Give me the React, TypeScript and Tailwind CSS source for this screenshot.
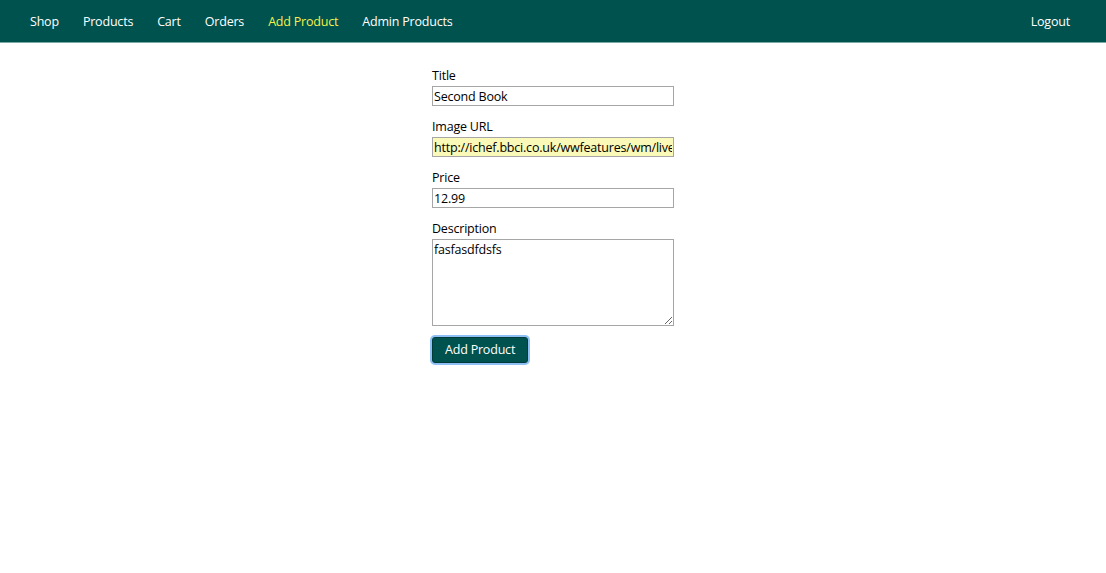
import React, { useState } from 'react';

const navItems = ['Shop', 'Products', 'Cart', 'Orders', 'Add Product', 'Admin Products'];

const Header: React.FC = () => (
    <header className="h-[43px] bg-[#00524f] border-b border-[#7fa9a7] flex items-center justify-between pl-[30px] pr-[36px] pt-[2px]">
        <nav className="flex items-center gap-[24px]">
            {navItems.map(item => (
                <a key={item} href="#" className={item === 'Add Product' ? 'text-[#f5f04a]' : 'text-white'}>
                    {item}
                </a>
            ))}
        </nav>
        <a href="#" className="text-white">Logout</a>
    </header>
);

const Field: React.FC<{ label: string; children: React.ReactNode }> = ({ label, children }) => (
    <div className="mb-[11px]">
        <label className="block pt-[1px] leading-[18px] text-black">{label}</label>
        <div className="mt-[1px]">{children}</div>
    </div>
);

const inputClass = 'block w-full h-[20px] px-[1px] border border-[#a6a6a6] text-[12.5px] tracking-[-0.2px] text-black outline-none';

const App: React.FC = () => {
    const [title, setTitle] = useState('Second Book');
    const [imageUrl, setImageUrl] = useState('http://ichef.bbci.co.uk/wwfeatures/wm/live/1280_640/images/live/p0/4y/8k/p04y8k8p.jpg');
    const [price, setPrice] = useState('12.99');
    const [description, setDescription] = useState('fasfasdfdsfs');

    return (
        <div className="min-h-[573px] bg-white font-['Open_Sans',sans-serif] text-[12.5px] tracking-[-0.2px]">
            <Header />
            <main className="w-[242px] mx-auto pt-[23px]">
                <form onSubmit={e => e.preventDefault()}>
                    <Field label="Title">
                        <input className={inputClass} value={title} onChange={e => setTitle(e.target.value)} />
                    </Field>
                    <Field label="Image URL">
                        <input className={inputClass + ' bg-[#fbf9b8]'} value={imageUrl} onChange={e => setImageUrl(e.target.value)} />
                    </Field>
                    <Field label="Price">
                        <input className={inputClass} value={price} onChange={e => setPrice(e.target.value)} />
                    </Field>
                    <Field label="Description">
                        <textarea
                            className="block w-full h-[87px] px-[1px] pt-[1px] pb-0 border border-[#a6a6a6] text-[12.5px] tracking-[-0.2px] text-black outline-none resize-y"
                            value={description}
                            onChange={e => setDescription(e.target.value)}
                        />
                    </Field>
                    <button
                        type="submit"
                        className="h-[26px] px-[12px] bg-[#00524f] text-white rounded-[3px] border border-[#003b39] ring-2 ring-[#8fc0f5]"
                    >
                        Add Product
                    </button>
                </form>
            </main>
        </div>
    );
};

export default App;
